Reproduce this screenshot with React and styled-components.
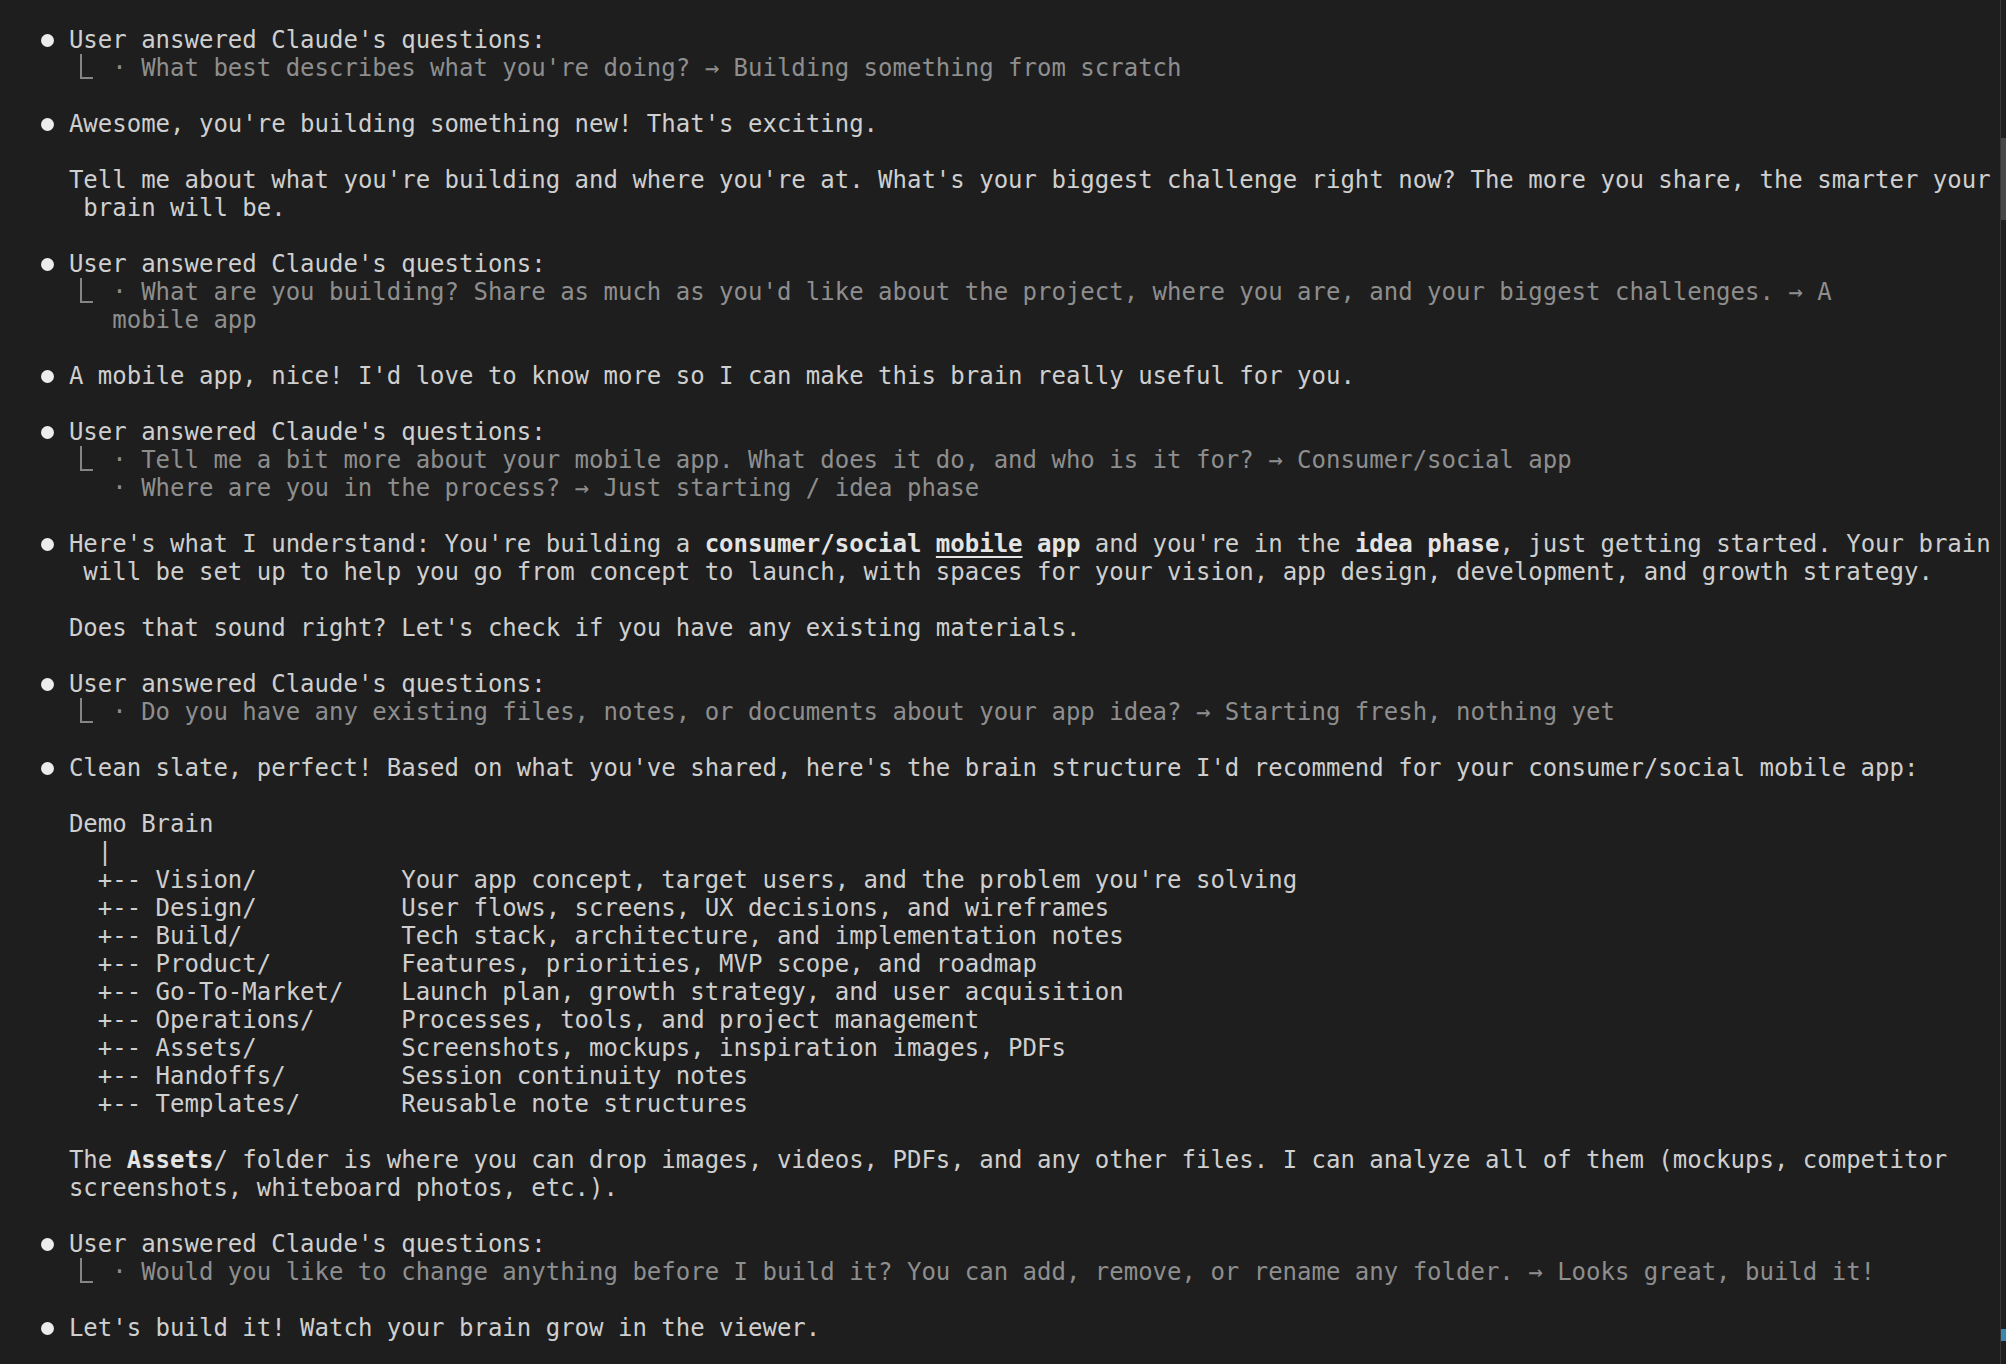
import React from 'react'
import styled, { createGlobalStyle } from 'styled-components'

const GlobalStyle = createGlobalStyle`
    html, body
    {
        margin: 0;
        padding: 0;
        background-color: #1e1e1e;
    }
`
const Terminal = styled.div`
    display: flex;
    height: 100vh;
    overflow: hidden;
    background-color: #1e1e1e;
    color: #cfcfcf;
    font-family: "DejaVu Sans Mono", "Liberation Mono", monospace;
    font-size: 24px;
    line-height: 28px;
`
const Output = styled.div`
    flex: 1;
    padding: 26px 0 0 40px;
    display: flex;
    flex-direction: column;
    gap: 28px;
`
const Entry = styled.div`
    display: flex;
`
const Bullet = styled.span`
    flex: none;
    width: 2ch;
    height: 28px;
    position: relative;
    &:before
    {
        content: "";
        position: absolute;
        left: 1px;
        top: 8px;
        width: 13px;
        height: 13px;
        border-radius: 50%;
        background-color: #ececec;
    }
`
const Body = styled.div`
    display: flex;
    flex-direction: column;
`
const Line = styled.div`
    white-space: pre;
    height: 28px;
    color: ${({ dim }) => dim ? '#8e8e8e' : '#cfcfcf'};
`
const Strong = styled.b`
    font-weight: 700;
    color: #e4e4e4;
    text-decoration: ${({ under }) => under ? 'underline' : 'none'};
    text-decoration-thickness: 2px;
    text-underline-offset: 4px;
`
const SubRow = styled.div`
    display: flex;
`
const Elbow = styled.span`
    flex: none;
    width: 3ch;
    height: 28px;
    position: relative;
    &:before
    {
        content: "";
        position: absolute;
        left: 11px;
        top: 0;
        width: 11px;
        height: 23px;
        border-left: 2px solid #858585;
        border-bottom: 2px solid #858585;
    }
`
const Scrollbar = styled.div`
    flex: none;
    width: 5px;
    border-left: 1px solid #383838;
    position: relative;
`
const Thumb = styled.div`
    position: absolute;
    left: 0;
    right: 0;
    top: 138px;
    height: 82px;
    background-color: #474747;
`
const Marker = styled.div`
    position: absolute;
    left: 0;
    right: 0;
    top: 1329px;
    height: 12px;
    background-color: #3d86ad;
`

const tree = [
    ['Vision/', 'Your app concept, target users, and the problem you\'re solving'],
    ['Design/', 'User flows, screens, UX decisions, and wireframes'],
    ['Build/', 'Tech stack, architecture, and implementation notes'],
    ['Product/', 'Features, priorities, MVP scope, and roadmap'],
    ['Go-To-Market/', 'Launch plan, growth strategy, and user acquisition'],
    ['Operations/', 'Processes, tools, and project management'],
    ['Assets/', 'Screenshots, mockups, inspiration images, PDFs'],
    ['Handoffs/', 'Session continuity notes'],
    ['Templates/', 'Reusable note structures'],
]

function Answered({ lines }) {
    return (
        <Entry>
            <Bullet />
            <Body>
                <Line>User answered Claude's questions:</Line>
                <SubRow>
                    <Elbow />
                    <Body>
                        {lines.map((l, i) => <Line dim key={i}>{l}</Line>)}
                    </Body>
                </SubRow>
            </Body>
        </Entry>
    )
}

function Said({ children }) {
    return (
        <Entry>
            <Bullet />
            <Body>{children}</Body>
        </Entry>
    )
}

export default function App() {
    return (
        <Terminal>
            <GlobalStyle />
            <Output>
                <Answered lines={["· What best describes what you're doing? → Building something from scratch"]} />
                <Said>
                    <Line>Awesome, you're building something new! That's exciting.</Line>
                    <Line> </Line>
                    <Line>Tell me about what you're building and where you're at. What's your biggest challenge right now? The more you share, the smarter your</Line>
                    <Line> brain will be.</Line>
                </Said>
                <Answered lines={[
                    "· What are you building? Share as much as you'd like about the project, where you are, and your biggest challenges. → A",
                    "mobile app",
                ]} />
                <Said>
                    <Line>A mobile app, nice! I'd love to know more so I can make this brain really useful for you.</Line>
                </Said>
                <Answered lines={[
                    "· Tell me a bit more about your mobile app. What does it do, and who is it for? → Consumer/social app",
                    "· Where are you in the process? → Just starting / idea phase",
                ]} />
                <Said>
                    <Line>Here's what I understand: You're building a <Strong>consumer/social</Strong> <Strong under>mobile</Strong> <Strong>app</Strong> and you're in the <Strong>idea phase</Strong>, just getting started. Your brain</Line>
                    <Line> will be set up to help you go from concept to launch, with spaces for your vision, app design, development, and growth strategy.</Line>
                    <Line> </Line>
                    <Line>Does that sound right? Let's check if you have any existing materials.</Line>
                </Said>
                <Answered lines={["· Do you have any existing files, notes, or documents about your app idea? → Starting fresh, nothing yet"]} />
                <Said>
                    <Line>Clean slate, perfect! Based on what you've shared, here's the brain structure I'd recommend for your consumer/social mobile app:</Line>
                    <Line> </Line>
                    <Line>Demo Brain</Line>
                    <Line>  |</Line>
                    {tree.map(([folder, note]) => (
                        <Line key={folder}>{('  +-- ' + folder).padEnd(23, ' ') + note}</Line>
                    ))}
                    <Line> </Line>
                    <Line>The <Strong>Assets</Strong>/ folder is where you can drop images, videos, PDFs, and any other files. I can analyze all of them (mockups, competitor</Line>
                    <Line>screenshots, whiteboard photos, etc.).</Line>
                </Said>
                <Answered lines={["· Would you like to change anything before I build it? You can add, remove, or rename any folder. → Looks great, build it!"]} />
                <Said>
                    <Line>Let's build it! Watch your brain grow in the viewer.</Line>
                </Said>
            </Output>
            <Scrollbar>
                <Thumb />
                <Marker />
            </Scrollbar>
        </Terminal>
    )
}
